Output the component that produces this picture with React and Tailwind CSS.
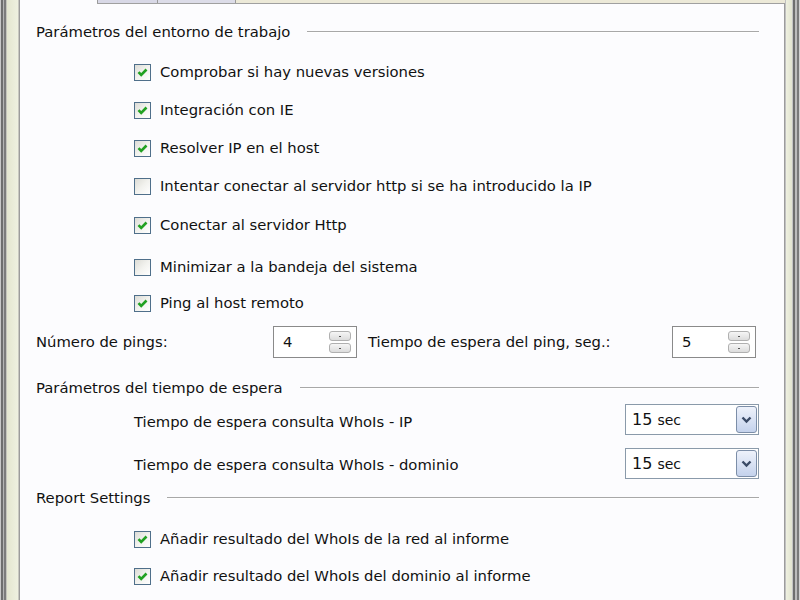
import React from "react";

const font = { fontFamily: '"DejaVu Sans", Verdana, sans-serif' };

function Check({ checked }) {
  return (
    <span className="flex h-[17px] w-[17px] shrink-0 items-center justify-center border border-[#4f6f8a] bg-gradient-to-br from-[#dcdcd6] via-[#f2f2ee] to-white">
      {checked && (
        <svg width="11" height="11" viewBox="0 0 11 11">
          <path d="M1.5 5.2 L4.2 8 L9.5 2.5" fill="none" stroke="#21a121" strokeWidth="2.6" />
        </svg>
      )}
    </span>
  );
}

function CheckRow({ checked, label, mt }) {
  return (
    <div className={`flex h-[20px] items-center gap-[9px] pl-[114px] ${mt}`}>
      <Check checked={checked} />
      <span>{label}</span>
    </div>
  );
}

function Header({ label, mt }) {
  return (
    <div className={`flex h-[20px] items-center ${mt}`}>
      <span className="pl-[16px]">{label}</span>
      <div className="ml-[17px] mr-[25px] h-[2px] flex-1 border-t border-[#a8a8a8] bg-white" />
    </div>
  );
}

function Spin({ value }) {
  return (
    <div className="flex h-[32px] w-[84px] items-center justify-between border border-[#8a8a8a] bg-white pl-[9px] pr-[5px]">
      <span>{value}</span>
      <div className="flex flex-col gap-[2px]">
        <div className="flex h-[10px] w-[22px] items-center justify-center rounded-[3px] border border-[#b0b0b0] bg-gradient-to-b from-[#f6f6f6] to-[#dcdcdc]">
          <span className="h-[1px] w-[2px] bg-[#555]" />
        </div>
        <div className="flex h-[10px] w-[22px] items-center justify-center rounded-[3px] border border-[#b0b0b0] bg-gradient-to-b from-[#f6f6f6] to-[#dcdcdc]">
          <span className="h-[1px] w-[2px] bg-[#555]" />
        </div>
      </div>
    </div>
  );
}

function Combo({ value }) {
  return (
    <div className="flex h-[31px] w-[134px] items-center justify-between border border-[#8a9aaa] bg-white pl-[6px] pr-[1px]">
      <span className="text-[16px]">
        15 <span className="text-[14px]">{value}</span>
      </span>
      <div className="flex h-[27px] w-[21px] items-center justify-center rounded-[3px] border border-[#7c8ea8] bg-gradient-to-b from-[#eef2fb] to-[#c4d2ec]">
        <svg width="11" height="8" viewBox="0 0 11 8">
          <path d="M1.5 1.5 L5.5 5.5 L9.5 1.5" fill="none" stroke="#3a4a66" strokeWidth="2.4" />
        </svg>
      </div>
    </div>
  );
}

export default function App() {
  return (
    <div className="flex h-[600px] w-[800px] overflow-hidden bg-[#ece9d8] text-[14.8px] text-[#111]" style={font}>
      {/* left window frame */}
      <div className="flex h-full shrink-0">
        <div className="w-[1px] bg-[#c8c8c8]" />
        <div className="w-[2px] bg-[#6e6e6e]" />
        <div className="w-[1px] bg-[#b4b4b4]" />
        <div className="w-[2px] bg-[#7c7c7c]" />
        <div className="w-[1px] bg-[#c4c4bc]" />
        <div className="w-[11px] bg-gradient-to-r from-[#e4e6d0] to-[#eef0e0]" />
        <div className="w-[1px] bg-[#c8c8c0]" />
        <div className="w-[1px] bg-[#9c9c9c]" />
      </div>

      {/* tab page */}
      <div className="flex h-full flex-1 flex-col">
        <div className="flex h-[3px] shrink-0">
          <div className="w-[77px] bg-[#fcfcfe]" />
          <div className="w-[1px] bg-[#9a9a9a]" />
          <div className="w-[59px] bg-[#d8d8e6]" />
          <div className="w-[1px] bg-[#9a9a9a]" />
          <div className="w-[77px] bg-[#dcdce8]" />
          <div className="w-[1px] bg-[#9a9a9a]" />
          <div className="flex-1 bg-[#ece9d8]" />
        </div>
        <div className="flex flex-1 flex-col border-t border-r border-t-[#a0a0a0] border-r-[#9c9c9c] bg-[#fcfcfe]">
          <div className="-mt-[1px] h-[1px] w-[77px] bg-[#fcfcfe]" />
          <Header label="Parámetros del entorno de trabajo" mt="mt-[18px]" />
          <CheckRow checked label="Comprobar si hay nuevas versiones" mt="mt-[20px]" />
          <CheckRow checked label="Integración con IE" mt="mt-[18px]" />
          <CheckRow checked label="Resolver IP en el host" mt="mt-[18px]" />
          <CheckRow label="Intentar conectar al servidor http si se ha introducido la IP" mt="mt-[18px]" />
          <CheckRow checked label="Conectar al servidor Http" mt="mt-[19px]" />
          <CheckRow label="Minimizar a la bandeja del sistema" mt="mt-[22px]" />
          <CheckRow checked label="Ping al host remoto" mt="mt-[16px]" />

          <div className="mt-[13px] flex h-[32px] items-center pl-[16px]">
            <span className="w-[237px]">Número de pings:</span>
            <Spin value="4" />
            <span className="ml-[11px] w-[304px]">Tiempo de espera del ping, seg.:</span>
            <Spin value="5" />
          </div>

          <Header label="Parámetros del tiempo de espera" mt="mt-[20px]" />

          <div className="mt-[6px] flex h-[31px] items-center justify-between pl-[114px] pr-[25px]">
            <span className="pt-[6px]">Tiempo de espera consulta WhoIs - IP</span>
            <Combo value="sec" />
          </div>
          <div className="mt-[13px] flex h-[31px] items-center justify-between pl-[114px] pr-[25px]">
            <span className="pt-[4px]">Tiempo de espera consulta WhoIs - dominio</span>
            <Combo value="sec" />
          </div>

          <Header label="Report Settings" mt="mt-[9px]" />
          <CheckRow checked label="Añadir resultado del WhoIs de la red al informe" mt="mt-[21px]" />
          <CheckRow checked label="Añadir resultado del WhoIs del dominio al informe" mt="mt-[17px]" />
        </div>
      </div>

      {/* right window frame */}
      <div className="flex h-full shrink-0">
        <div className="w-[1px] bg-[#c0c0c0]" />
        <div className="w-[6px] bg-gradient-to-r from-[#eef0e0] to-[#e2e4d0]" />
        <div className="w-[1px] bg-[#c4c4c4]" />
        <div className="w-[2px] bg-[#6e6e6e]" />
        <div className="w-[2px] bg-[#bcbcbc]" />
        <div className="w-[2px] bg-[#7a7a7a]" />
        <div className="w-[1px] bg-[#d0d0d0]" />
      </div>
    </div>
  );
}
